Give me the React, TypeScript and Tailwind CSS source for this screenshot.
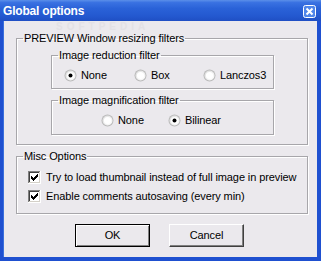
import React from "react";

const font = { fontFamily: '"Liberation Sans", Arial, sans-serif' };

function Radio({ checked }: { checked?: boolean }) {
  return (
    <svg width="13" height="13" viewBox="0 0 13 13" className="shrink-0">
      <defs>
        <linearGradient id="rg" x1="0" y1="0" x2="1" y2="1">
          <stop offset="0" stopColor="#dcdcdc" />
          <stop offset="1" stopColor="#ffffff" />
        </linearGradient>
      </defs>
      <circle cx="6.5" cy="6.5" r="6" fill="#b9b9b9" />
      <circle cx="6.5" cy="6.5" r="5" fill="url(#rg)" />
      <circle cx="6.5" cy="6.5" r="3.6" fill="#ffffff" />
      {checked && <circle cx="6.5" cy="6.5" r="2" fill="#000000" />}
    </svg>
  );
}

function Check() {
  return (
    <svg width="13" height="13" viewBox="0 0 13 13" className="shrink-0" shapeRendering="crispEdges">
      <rect x="0" y="0" width="13" height="13" fill="#ffffff" />
      <rect x="0" y="0" width="12" height="1" fill="#808080" />
      <rect x="0" y="0" width="1" height="12" fill="#808080" />
      <rect x="1" y="1" width="10" height="1" fill="#404040" />
      <rect x="1" y="1" width="1" height="10" fill="#404040" />
      <rect x="1" y="11" width="11" height="1" fill="#d4d0c8" />
      <rect x="11" y="1" width="1" height="11" fill="#d4d0c8" />
      <path
        d="M9 3h1v3h-1zM8 4h1v3h-1zM7 5h1v3h-1zM6 6h1v3h-1zM5 7h1v3h-1zM4 6h1v3h-1zM3 5h1v3h-1z"
        fill="#000"
      />
    </svg>
  );
}

function Group({
  label,
  className,
  inner,
  children,
}: {
  label: string;
  className?: string;
  inner?: string;
  children: React.ReactNode;
}) {
  return (
    <fieldset
      className={
        "border border-[#a7a6aa] rounded-none shadow-[inset_1px_1px_0_#ffffff,1px_1px_0_#ffffff] min-w-0 p-0 " +
        (className ?? "")
      }
    >
      <legend className="ml-[6px] px-[1px] text-[11px] leading-[13px] text-black tracking-[-0.1px]">
        {label}
      </legend>
      <div className={inner}>{children}</div>
    </fieldset>
  );
}

function Button({ label, def }: { label: string; def?: boolean }) {
  return (
    <div
      className={
        "w-[75px] h-[23px] flex items-center justify-center text-[11px] text-black bg-[#ebe9ed] " +
        (def
          ? "border border-black shadow-[inset_1px_1px_0_#ffffff,inset_-1px_-1px_0_#808080]"
          : "border-t border-l border-t-white border-l-white border-r border-b border-r-[#404040] border-b-[#404040] shadow-[inset_-1px_-1px_0_#808080]")
      }
    >
      {label}
    </div>
  );
}

export default function App() {
  return (
    <div
      className="w-[321px] h-[261px] flex flex-col bg-[#1f50d0] overflow-hidden select-none"
      style={font}
    >
      {/* Title bar */}
      <div className="h-[21px] shrink-0 flex items-center justify-between pl-[3px] pr-[5px] bg-[linear-gradient(180deg,#5b8fe9_0%,#3a72e2_12%,#2a62d8_40%,#2459d0_75%,#1f4fc4_100%)]">
        <span className="text-white font-bold text-[12px] leading-[15px] mt-[1px] tracking-[-0.2px]">
          Global options
        </span>
        <svg width="13" height="13" viewBox="0 0 13 13" className="mt-[1px]">
          <rect x="0.5" y="0.5" width="12" height="12" rx="2" fill="#4f86ea" stroke="#ffffff" />
          <path d="M3.5 3.5 L9.5 9.5 M9.5 3.5 L3.5 9.5" stroke="#ffffff" strokeWidth="2" />
        </svg>
      </div>

      {/* Client */}
      <div className="relative flex-1 ml-[3px] mr-[4px] mb-[4px] bg-[#ebe9ed] flex flex-col pl-[12px] pt-[11px] border-l border-[#3a6fdc] text-[11px] leading-[13px] tracking-[-0.1px]">
        <span className="absolute left-[52px] top-[1px] text-[10px] leading-[10px] font-bold text-[#e3e1e5] tracking-[4px]">
          SOFTPEDIA
        </span>
        <Group label="PREVIEW Window resizing filters" className="relative w-[292px]" inner="pl-[34px] pt-[4px] pb-[9px]">
          <Group label="Image reduction filter" className="w-[223px]" inner="pt-[7px] pb-[6px]">
            <div className="flex items-center pl-[12px]">
              <div className="w-[70px] flex items-center gap-[4px]">
                <Radio checked />
                <span>None</span>
              </div>
              <div className="w-[69px] flex items-center gap-[4px]">
                <Radio />
                <span>Box</span>
              </div>
              <div className="flex items-center gap-[4px]">
                <Radio />
                <span>Lanczos3</span>
              </div>
            </div>
          </Group>
          <Group label="Image magnification filter" className="w-[223px] mt-[5px]" inner="pt-[7px] pb-[7px]">
            <div className="flex items-center pl-[49px]">
              <div className="w-[67px] flex items-center gap-[4px]">
                <Radio />
                <span>None</span>
              </div>
              <div className="flex items-center gap-[4px]">
                <Radio checked />
                <span>Bilinear</span>
              </div>
            </div>
          </Group>
        </Group>

        <Group label="Misc Options" className="w-[292px] mt-[5px]" inner="pt-[8px] pb-[10px] pl-[11px]">
          <div className="flex flex-col gap-[6px]">
            <div className="flex items-center gap-[5px]">
              <Check />
              <span>Try to load thumbnail instead of full image in preview</span>
            </div>
            <div className="flex items-center gap-[5px]">
              <Check />
              <span>Enable comments autosaving (every min)</span>
            </div>
          </div>
        </Group>

        <div className="flex gap-[19px] mt-[10px] pl-[59px]">
          <Button label="OK" def />
          <Button label="Cancel" />
        </div>
      </div>
    </div>
  );
}
